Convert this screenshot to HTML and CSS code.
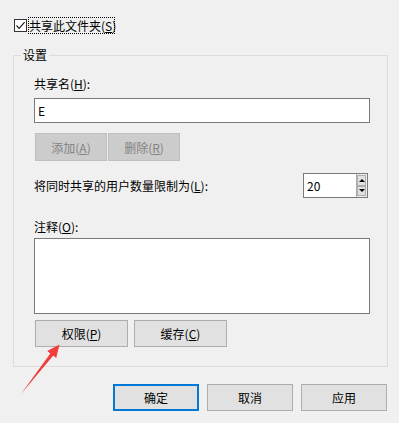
FILE: index.html
```html
<!DOCTYPE html>
<html lang="zh-CN">
<head>
    <meta charset="UTF-8">
    <title>高级共享</title>
    <link rel="stylesheet" href="styles.css">
</head>
<body>
    <div class="dialog">
        <label class="share-toggle">
            <span class="check">
                <svg width="11" height="11" viewBox="0 0 11 11"><path d="M1.5 5.5 L4.2 8.3 L9.6 2.2" fill="none" stroke="#222" stroke-width="1.2"/></svg>
            </span>
            <span class="focus">共享此文件夹(<u>S</u>)</span>
        </label>

        <div class="group">
            <span class="group-title">设置</span>

            <div class="field-label">共享名(<u>H</u>):</div>
            <input class="textbox" type="text" value="E">

            <div class="btn-row small">
                <button disabled>添加(<u>A</u>)</button>
                <button disabled>删除(<u>R</u>)</button>
            </div>

            <div class="limit-row">
                <span>将同时共享的用户数量限制为(<u>L</u>):</span>
                <div class="spin">
                    <input type="text" value="20">
                    <div class="spin-btns">
                        <span class="spin-btn"><i class="up"></i></span>
                        <span class="spin-btn"><i class="down"></i></span>
                    </div>
                </div>
            </div>

            <div class="field-label comment">注释(<u>O</u>):</div>
            <textarea class="memo"></textarea>

            <div class="btn-row wide">
                <button>权限(<u>P</u>)</button>
                <button>缓存(<u>C</u>)</button>
            </div>
        </div>

        <div class="footer">
            <button class="default">确定</button>
            <button>取消</button>
            <button>应用</button>
        </div>

        <!-- 红色箭头标注 -->
        <svg class="arrow" width="399" height="423" viewBox="0 0 399 423">
            <polygon points="21,394 50.3,353.4 47.2,351 59.5,344.5 56.2,358 53.3,355.6" fill="#f23c3c"/>
        </svg>
    </div>
</body>
</html>
```

FILE: styles.css
```css
body {
    margin: 0;
    padding: 0;
    background-color: #f0f0f0;
    font-family: "Noto Sans CJK SC", "Liberation Sans", sans-serif;
    font-size: 12px;
    color: #000;
}

.dialog {
    position: relative;
    width: 399px;
    height: 423px;
    padding: 17px 11px 0 13px;
    box-sizing: border-box;
}

u {
    text-decoration: underline;
    text-underline-offset: 1px;
}

.share-toggle {
    display: flex;
    align-items: center;
    height: 17px;
}

.check {
    width: 13px;
    height: 13px;
    box-sizing: border-box;
    border: 1px solid #333;
    background-color: #fff;
    margin: 0 1px 0 1px;
    display: flex;
    align-items: center;
    justify-content: center;
}

.focus {
    border: 1px dotted #000;
    line-height: 15px;
    padding: 0 1px 0 0;
    width: 87px;
    box-sizing: border-box;
    white-space: nowrap;
}

.group {
    position: relative;
    margin-top: 21px;
    border: 1px solid #dcdcdc;
    padding: 20px 17px 19px 20px;
}

.group-title {
    position: absolute;
    top: -9px;
    left: 7px;
    padding: 0 2px;
    line-height: 16px;
    background-color: #f0f0f0;
}

.field-label {
    line-height: 16px;
    margin-bottom: 6px;
}

.field-label.comment {
    margin-top: 21px;
    margin-bottom: 3px;
}

.textbox,
.memo {
    display: block;
    width: 100%;
    box-sizing: border-box;
    border: 1px solid #7a7a7a;
    background-color: #fff;
    font-family: inherit;
    font-size: 12px;
    margin: 0;
    outline: none;
}

.textbox {
    height: 25px;
    padding: 0 3px;
}

.memo {
    height: 76px;
    resize: none;
}

button {
    font-family: inherit;
    font-size: 12px;
    color: #000;
    background-color: #e1e1e1;
    border: 1px solid #adadad;
    padding: 0;
    height: 27px;
    box-sizing: border-box;
}

button:disabled {
    background-color: #cccccc;
    border-color: #bfbfbf;
    color: #838383;
}

.btn-row {
    display: flex;
}

.btn-row.small {
    margin: 10px 0 0 1px;
    gap: 1px;
}

.btn-row.small button {
    width: 72px;
    height: 28px;
}

.btn-row.wide {
    margin: 6px 0 0 1px;
    gap: 6px;
}

.btn-row.wide button {
    width: 93px;
}

.limit-row {
    display: flex;
    align-items: center;
    justify-content: space-between;
    margin-top: 12px;
    padding-right: 2px;
    height: 25px;
}

.spin {
    display: flex;
    width: 65px;
    height: 25px;
    box-sizing: border-box;
    border: 1px solid #7a7a7a;
    background-color: #fff;
}

.spin input {
    width: 46px;
    border: none;
    padding: 0 3px;
    font-family: inherit;
    font-size: 12px;
    outline: none;
    background: transparent;
}

.spin-btns {
    display: flex;
    flex-direction: column;
    justify-content: space-between;
    width: 17px;
    padding: 1px 1px 1px 0;
    border-left: 1px solid #adadad;
    background-color: #f0f0f0;
    box-sizing: border-box;
}

.spin-btn {
    height: 10px;
    background-color: #e1e1e1;
    border: 1px solid #adadad;
    display: flex;
    align-items: center;
    justify-content: center;
}

.spin-btn i {
    width: 0;
    height: 0;
    border-left: 3px solid transparent;
    border-right: 3px solid transparent;
}

.spin-btn .up {
    border-bottom: 3px solid #000;
}

.spin-btn .down {
    border-top: 3px solid #000;
}

.footer {
    display: flex;
    justify-content: flex-end;
    gap: 8px;
    margin-top: 17px;
    padding-right: 1px;
}

.footer button {
    width: 86px;
}

.footer button.default {
    border: 2px solid #0078d7;
}

.arrow {
    position: absolute;
    top: 0;
    left: 0;
    pointer-events: none;
}
```
